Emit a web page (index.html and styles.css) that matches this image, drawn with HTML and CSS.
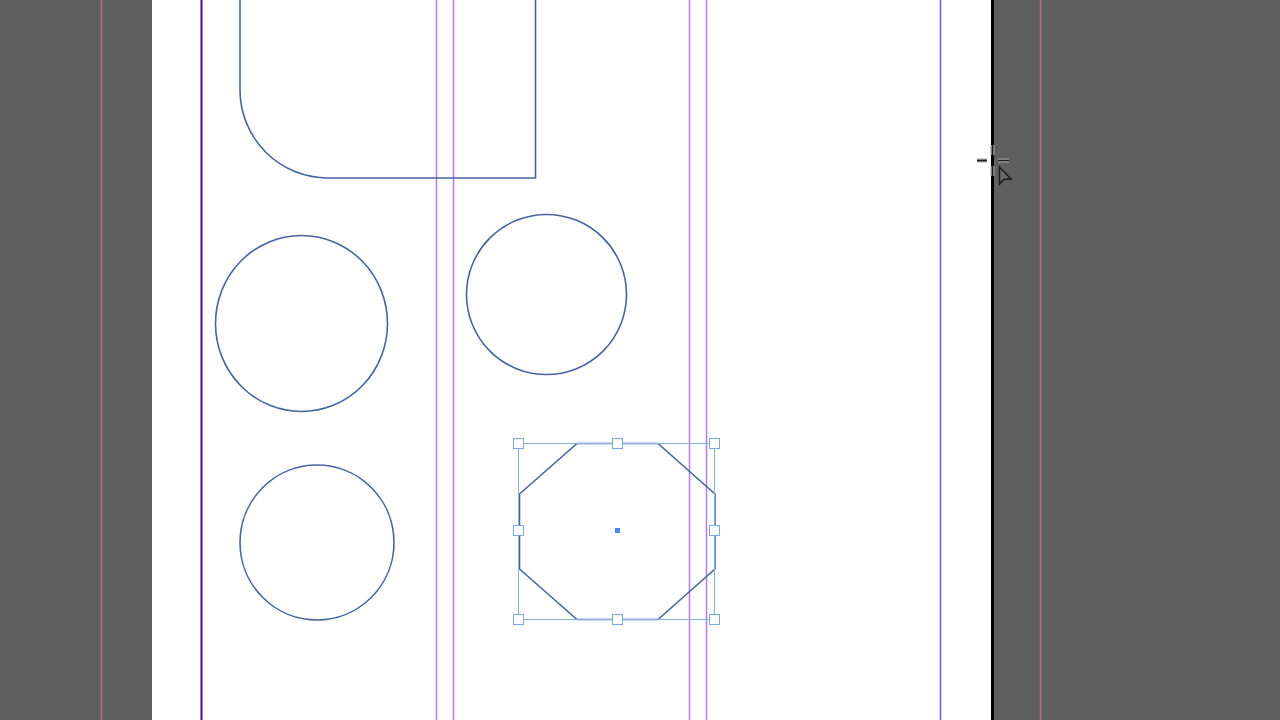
FILE: index.html
```html
<!DOCTYPE html>
<html lang="en">
<head>
    <meta charset="UTF-8">
    <title>Layout Canvas</title>
    <link rel="stylesheet" href="styles.css">
</head>
<body>
    <div class="workspace">
        <div class="page"></div>

        <svg class="overlay" width="1280" height="720" viewBox="0 0 1280 720">
            <!-- bleed guides -->
            <line class="bleed" x1="101.5" y1="0" x2="101.5" y2="720"/>
            <line class="bleed" x1="1040.5" y1="0" x2="1040.5" y2="720"/>

            <!-- margins -->
            <line class="margin-left" x1="201.5" y1="0" x2="201.5" y2="720"/>
            <line class="margin-right" x1="940.5" y1="0" x2="940.5" y2="720"/>

            <!-- column guides -->
            <line class="column" x1="436.5" y1="0" x2="436.5" y2="720"/>
            <line class="column" x1="453.5" y1="0" x2="453.5" y2="720"/>
            <line class="column" x1="689.5" y1="0" x2="689.5" y2="720"/>
            <line class="column" x1="706.5" y1="0" x2="706.5" y2="720"/>

            <!-- shapes -->
            <path class="shape" d="M240 -2 V90 A88 88 0 0 0 328 178 H535.5 V-2"/>
            <ellipse class="shape" cx="301.5" cy="323.5" rx="86" ry="88"/>
            <circle class="shape" cx="546.5" cy="294.5" r="80"/>
            <ellipse class="shape" cx="317" cy="542.5" rx="77" ry="77.5"/>
            <polygon class="shape" points="577,443.5 658,443.5 715,494 715,569 658,619.5 577,619.5 519.5,569 519.5,494"/>

            <!-- selection -->
            <rect class="sel-box" x="518.5" y="443.5" width="196" height="176"/>
            <rect class="handle" x="513.5" y="438.5" width="10" height="10"/>
            <rect class="handle" x="612.5" y="438.5" width="10" height="10"/>
            <rect class="handle" x="709.5" y="438.5" width="10" height="10"/>
            <rect class="handle" x="513.5" y="525.5" width="10" height="10"/>
            <rect class="handle" x="709.5" y="525.5" width="10" height="10"/>
            <rect class="handle" x="513.5" y="614.5" width="10" height="10"/>
            <rect class="handle" x="612.5" y="614.5" width="10" height="10"/>
            <rect class="handle" x="709.5" y="614.5" width="10" height="10"/>
            <rect class="center-pt" x="615" y="528" width="5" height="5"/>

            <!-- cursor -->
            <g class="cursor">
                <path class="cursor-edge" d="M977 160.5 H987 M998 160.5 H1009 M992.5 145 V155 M992.5 166 V176"/>
                <path class="cursor-line" d="M977 160.5 H987 M998 160.5 H1009 M992.5 145 V155 M992.5 166 V176"/>
                <path class="cursor-arrow" d="M999.5 167 L999.5 184 L1003.5 179.5 L1011 179 Z"/>
            </g>
        </svg>
    </div>
</body>
</html>
```

FILE: styles.css
```css
body {
    margin: 0;
    background-color: #5f5f5f;
    overflow: hidden;
}
.workspace {
    position: relative;
    width: 1280px;
    height: 720px;
    background-color: #5f5f5f;
}
.page {
    margin-left: 152px;
    width: 839px;
    height: 720px;
    background-color: #ffffff;
    border-right: 3px solid #000000;
}
.overlay {
    position: absolute;
    left: 0;
    top: 0;
}
.bleed {
    stroke: #b66a84;
    stroke-width: 1.5;
}
.margin-left {
    stroke: #4a0a88;
    stroke-width: 2;
}
.margin-right {
    stroke: #6a5ae8;
    stroke-width: 1.5;
}
.column {
    stroke: #b47ae6;
    stroke-width: 1.5;
}
.shape {
    fill: none;
    stroke: #46659e;
    stroke-width: 1.6;
}
.sel-box {
    fill: none;
    stroke: #86b0e6;
    stroke-width: 1;
}
.handle {
    fill: #ffffff;
    stroke: #7ca6e2;
    stroke-width: 1;
}
.center-pt {
    fill: #4a8ae6;
}
.cursor-edge {
    stroke: #a0a0a0;
    stroke-width: 4;
    fill: none;
}
.cursor-line {
    stroke: #1a1a1a;
    stroke-width: 1.5;
    fill: none;
}
.cursor-arrow {
    fill: #6a6a6a;
    stroke: #1a1a1a;
    stroke-width: 1.5;
}
```
